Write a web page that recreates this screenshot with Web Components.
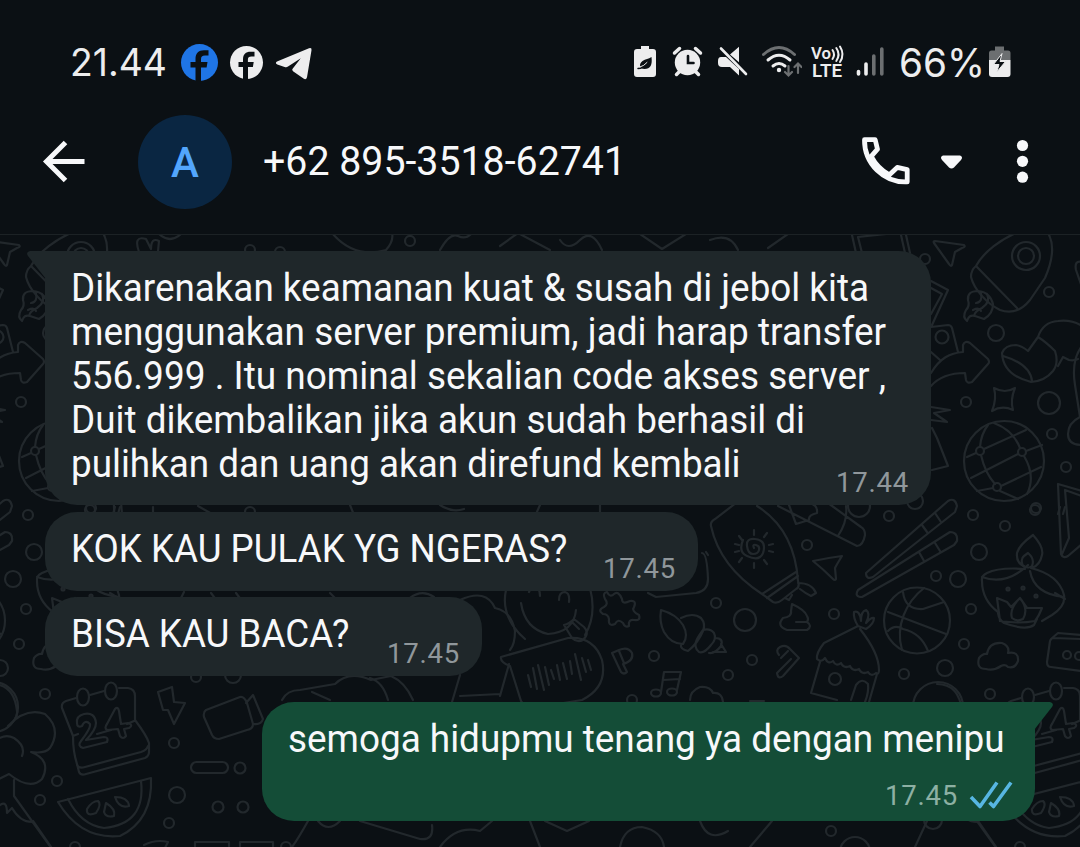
<!DOCTYPE html>
<html lang="id">
<head>
<meta charset="utf-8">
<title>Chat</title>
<style>
  html, body {
    margin: 0;
    background: #0b1014;
  }
  body {
    width: 1080px;
    height: 847px;
    overflow: hidden;
    font-family: Roboto, "Liberation Sans", sans-serif;
  }
</style>
</head>
<body>
<chat-screen>
  <status-bar slot="status" time="21.44" battery="66%"></status-bar>
  <chat-header slot="header" initial="A">+62 895-3518-62741</chat-header>
  <chat-bubble tail time="17.44" style="--w: 886px; --h: 254px">
    <text-line w="798">Dikarenakan keamanan kuat &amp; susah di jebol kita</text-line>
    <text-line w="815">menggunakan server premium, jadi harap transfer</text-line>
    <text-line w="815">556.999 . Itu nominal sekalian code akses server ,</text-line>
    <text-line w="734">Duit dikembalikan jika akun sudah berhasil di</text-line>
    <text-line w="669.5">pulihkan dan uang akan direfund kembali</text-line>
  </chat-bubble>
  <chat-bubble time="17.45" style="--w: 653px; --h: 79px; --gap: 7px">
    <text-line w="496.5">KOK KAU PULAK YG NGERAS?</text-line>
  </chat-bubble>
  <chat-bubble time="17.45" style="--w: 437px; --h: 79px; --gap: 6px">
    <text-line w="278.5">BISA KAU BACA?</text-line>
  </chat-bubble>
  <chat-bubble out tail time="17.45" style="--w: 773px; --h: 119px; --gap: 26px">
    <text-line w="716.5">semoga hidupmu tenang ya dengan menipu</text-line>
  </chat-bubble>
</chat-screen>

<script>
function attach(el, html) {
  const template = document.createElement('template');
  template.innerHTML = html;
  el.attachShadow({mode: 'open'}).appendChild(template.content.cloneNode(true));
}

class ChatScreen extends HTMLElement {
  constructor() {
    super();
    attach(this, `
      <style>
        :host {
          display: flex;
          flex-direction: column;
          width: 1080px;
          height: 847px;
          background: #0b1014;
        }
        .top {
          height: 234px;
          flex: none;
          border-bottom: 1px solid #1c2225;
        }
        .body {
          position: relative;
          flex: 1;
          overflow: hidden;
        }
        chat-wallpaper {
          position: absolute;
          inset: 0;
        }
        .list {
          position: relative;
          display: flex;
          flex-direction: column;
          align-items: flex-start;
          padding: 16px 45px 0;
        }
      </style>
      <div class="top">
        <slot name="status"></slot>
        <slot name="header"></slot>
      </div>
      <div class="body">
        <chat-wallpaper></chat-wallpaper>
        <div class="list"><slot></slot></div>
      </div>`);
  }
}

class StatusBar extends HTMLElement {
  constructor() {
    super();
    attach(this, `
      <style>
        :host {
          display: flex;
          align-items: center;
          box-sizing: border-box;
          height: 124px;
          padding: 0 69px 0 70px;
          color: #ededee;
        }
        svg { display: block; flex: none; }
        text-line { font-family: Inter, Roboto, sans-serif; }
        .apps { margin-left: 10px; }
        .icons { margin-right: 6px; }
        .end { margin-left: auto; display: flex; align-items: center; }
      </style>
      <text-line id="time" w="97" size="38.5"></text-line>
      <svg class="apps" width="150" height="44" viewBox="177 40 150 44">
        <circle cx="199.500" cy="62.500" r="18.500" fill="#1f75e6"/>
        <path d="M195.500 82V67.500h-5V62h5v-3c0-6 3-8.800 8.500-8.800h4.500v5.200h-3.500c-3 0-4 1.200-4 3.800V62h6.500l-.9 5.500H201V82z" fill="#0b1014"/>
        <circle cx="246.500" cy="62.500" r="16.500" fill="#ededee"/>
        <path d="M243 80V67h-4.500v-5h4.500v-2.500c0-5.300 2.700-7.800 7.500-7.800h4v4.700h-3c-2.700 0-3.600 1-3.600 3.300V62h5.800l-.8 5H248v13z" fill="#0b1014"/>
        <path d="M277 61.500 309 48.300q3-.9 2.500 2l-4.500 27q-.8 3-3.500 1.300L293 71.200q-1.600-1.200-.2-2.600l8-10.300L288 66.600q-1.600.9-3.400.3l-7.300-2.400q-2.700-1.500-.3-3z" fill="#ededee"/>
      </svg>
      <div class="end">
        <svg class="icons" width="172" height="44" viewBox="630 40 172 44" fill="none" stroke-linecap="round">
          <path d="M641 46h8v3h4q3 0 3 3v22q0 3-3 3h-16q-3 0-3-3V52q0-3 3-3h4z" fill="#ededee"/>
          <path d="M651.500 57c1 8-1 12-7 12-5 0-6-5-2-8 3-2 6-2 9-4z" fill="#0b1014"/>
          <path d="M638 68.500q5 0 9-5" stroke="#0b1014" stroke-width="1.500"/>
          <path d="M640 67q4-1 7-4.500" stroke="#ededee" stroke-width="1"/>
          <circle cx="687.500" cy="62.500" r="12.700" fill="#ededee"/>
          <path d="m674.500 53 5-4.500M700.500 53l-5-4.500" stroke="#ededee" stroke-width="3.500"/>
          <path d="m680 71-3.500 3.500M695 71l3.500 3.500" stroke="#ededee" stroke-width="3.500"/>
          <path d="M688 56v7h5.500" stroke="#0b1014" stroke-width="2.600"/>
          <path d="M730 54.500 739 46.700v15.500zM721 57h5l13 12v6.500l-9-8.500h-8q-4 0-4-4v-2q0-4 3-4z" fill="#ededee"/>
          <path d="m721 48.500 25 25.500" stroke="#ededee" stroke-width="2.600"/>
          <path d="M763.500 54.500q15.500-14 31 0" stroke="#6c6f71" stroke-width="3"/>
          <path d="M768 60q11-9.500 22 0M773 66q6-5 12 0" stroke="#ededee" stroke-width="3"/>
          <circle cx="779" cy="70" r="2.200" fill="#ededee"/>
          <path d="M788.500 66v9m-3.500-3 3.500 3.500 3.500-3.500M798 73v-9m-3.500 3 3.500-3.500 3.500 3.500" stroke="#6c6f71" stroke-width="2.200"/>
        </svg>
        <svg width="82" height="44" viewBox="808 40 82 44" fill="none" stroke-linecap="round">
          <g fill="#ededee" font-family="Roboto" font-weight="600">
            <text x="811" y="59" font-size="17" textLength="20" lengthAdjust="spacingAndGlyphs">Vo</text>
            <text x="812" y="77.300" font-size="17.500" textLength="30" lengthAdjust="spacingAndGlyphs">LTE</text>
          </g>
          <path d="M832.500 50q3 4.500 0 9M836.300 48q4.500 6.500 0 13M840 46.500q5 8 0 15.500" stroke="#ededee" stroke-width="2"/>
          <path d="M858.500 71.500v2.500M866 64v10" stroke="#ededee" stroke-width="3.600"/>
          <path d="M873.800 56v18M881.800 49v25" stroke="#6c6f71" stroke-width="3.600"/>
        </svg>
        <text-line id="battery" w="86" size="39" style="margin-left: 9px"></text-line>
        <svg width="26" height="44" viewBox="985 40 26 44">
          <path d="M995 46.500h9v4h4q2.500 0 2.500 2.500v7h-21.500v-7q0-2.500 2.500-2.500h3.500z" fill="#6c6f71"/>
          <path d="M989 60h21.500v14q0 3-3 3h-15.500q-3 0-3-3z" fill="#ededee"/>
          <path d="M1002 53.500 993.500 64.500h5.500L996.800 72 1005.500 61.500h-5.500z" fill="#0b1014" stroke="#ededee" stroke-width="1"/>
        </svg>
      </div>`);
    this.shadowRoot.getElementById('time').textContent = this.getAttribute('time');
    this.shadowRoot.getElementById('battery').textContent = this.getAttribute('battery');
  }
}

class ChatHeader extends HTMLElement {
  constructor() {
    super();
    attach(this, `
      <style>
        :host {
          display: flex;
          align-items: center;
          height: 76px;
          padding-left: 40px;
          color: #f7f8fa;
        }
        svg { display: block; flex: none; }
        .avatar {
          display: flex;
          align-items: center;
          justify-content: center;
          flex: none;
          width: 94px;
          height: 94px;
          margin: 0 31px 0 50px;
          border-radius: 50%;
          background: #0a2642;
          color: #53a6fd;
          font-size: 42px;
          font-weight: 500;
        }
        .name { margin-bottom: 2px; }
        .actions { margin-left: auto; }
      </style>
      <svg width="48" height="50" viewBox="40 137 48 50" fill="none" stroke="#f7f8fa" stroke-width="5">
        <path d="M84.500 161.500H47M65.500 142.500l-19 19 19 19"/>
      </svg>
      <div class="avatar"></div>
      <text-line class="name" w="363" size="40"><slot></slot></text-line>
      <svg class="actions" width="220" height="60" viewBox="860 132 220 60" fill="none" stroke="#f7f8fa">
        <path d="M864.500 139.700h10.700l2.300 9.500-6.300 7.200c4 7.500 10 14 18 18.500l8-7.500 10 2.200v12.300c-23 1-43-18-42.700-42.200z" stroke-width="4.800" stroke-linejoin="round"/>
        <path d="M871 157l-3 1.500M888.500 175l-1.500 4" stroke-width="3"/>
        <path d="M943 155.500h17q3.500 1.500 1 4.500l-7 7.500q-2.500 2-5 0l-7-7.500q-2.500-3 1-4.500z" fill="#f7f8fa" stroke="none"/>
        <g fill="#f7f8fa" stroke="none">
          <circle cx="1022.500" cy="145.500" r="5.600"/>
          <circle cx="1022.500" cy="161.300" r="5.600"/>
          <circle cx="1022.500" cy="177.200" r="5.600"/>
        </g>
      </svg>`);
    this.shadowRoot.querySelector('.avatar').textContent = this.getAttribute('initial');
  }
}

/* One line of text, fitted to a set width: stretched, or letter spaced with "track" */
class TextLine extends HTMLElement {
  constructor() {
    super();
    attach(this, `
      <style>
        :host {
          display: block;
          flex: none;
          white-space: nowrap;
        }
        span {
          display: inline-block;
          transform-origin: 0 50%;
        }
      </style>
      <span><slot></slot></span>`);
  }

  connectedCallback() {
    if (this.hasAttribute('size')) {
      this.style.fontSize = this.getAttribute('size') + 'px';
    }
    this.style.width = this.getAttribute('w') + 'px';
    requestAnimationFrame(() => this.fit());
  }

  fit() {
    const span = this.shadowRoot.querySelector('span');
    const want = Number(this.getAttribute('w'));
    const width = span.getBoundingClientRect().width;
    if (!want || !width) return;
    if (this.hasAttribute('track')) {
      span.style.letterSpacing = (want - width) / this.textContent.length + 'px';
    } else {
      span.style.transform = `scaleX(${want / width})`;
    }
  }
}

class ChatBubble extends HTMLElement {
  constructor() {
    super();
    attach(this, `
      <style>
        :host {
          position: relative;
          display: block;
          box-sizing: border-box;
          width: var(--w);
          height: var(--h);
          margin-top: var(--gap, 0);
          padding: 15px 0 0 25.500px;
          border-radius: 32px;
          background: #1f272a;
          color: #f7f8fa;
          font-size: 38.500px;
          line-height: 44px;
        }
        :host([tail]) { border-top-left-radius: 0; }
        :host([out]) {
          align-self: flex-end;
          background: #144d37;
          border-radius: 32px 0 32px 32px;
        }
        .tail { display: none; position: absolute; top: 0; left: -18px; }
        :host([tail]) .tail { display: block; }
        :host([out]) .tail { left: auto; right: -18px; transform: scaleX(-1); }
        .tail path { fill: #1f272a; }
        :host([out]) .tail path { fill: #144d37; }
        .meta {
          position: absolute;
          right: 22px;
          bottom: 6px;
          display: flex;
          align-items: center;
          font-size: 27.500px;
          line-height: 32px;
          color: #90979b;
        }
        .ticks { display: none; margin-left: 11px; }
        :host([out]) .meta { color: #8db0a3; bottom: 9px; }
        :host([out]) .ticks { display: block; }
      </style>
      <svg class="tail" width="19" height="28" viewBox="0 0 19 28"><path d="M3 0h16v28L1 5Q-1.500 1 3 0z"/></svg>
      <slot></slot>
      <div class="meta">
        <text-line id="time" w="73" track></text-line>
        <svg class="ticks" width="44" height="30" viewBox="0 0 44 30" fill="none" stroke="#57b6e2" stroke-width="3.600" stroke-linejoin="round"><path d="m2 16 9 9.500L28 1.500M20.500 21.500l4 4L42 1.500"/></svg>
      </div>`);
    this.shadowRoot.getElementById('time').textContent = this.getAttribute('time');
  }
}

/* Doodle wallpaper, repeats every 945px */
class ChatWallpaper extends HTMLElement {
  constructor() {
    super();
    const dots = [
      [925, 259, 5], [1049, 292, 5], [996, 333, 8], [966, 402, 5], [1049, 403, 11], [1052, 434, 5],
      [1066, 467, 5], [942, 337, 6.5], [807, 545, 5], [716, 603, 5], [745, 620, 11], [834, 614, 5],
      [752, 660, 5], [728, 675, 5], [936, 576, 5], [958, 579, 8], [979, 552, 8], [889, 516, 5],
      [973, 515, 5], [1005, 526, 5], [1035, 510, 5], [971, 609, 5], [964, 644, 5], [945, 668, 8],
      [904, 674, 5], [990, 694, 5], [915, 501, 8], [859, 506, 11], [654, 656, 5], [938, 707, 25],
      [632, 700, 5], [57, 781, 5], [40, 800, 5], [174, 743, 5], [240, 768, 5.5], [177, 795, 8],
      [169, 823, 5], [218, 807, 5.5], [243, 807, 5.5], [233, 675, 8], [196, 677, 5], [75, 847, 5],
      [250, 250, 5], [280, 252, 5], [831, 831, 5], [410, 241, 5], [855, 852, 15], [933, 820, 9],
      [91, 508, 5], [250, 512, 5], [286, 847, 5]
    ].map(([x, y, r]) => `<circle cx="${x}" cy="${y}" r="${r}"/>`).join('');
    attach(this, `
      <style>
        :host { display: block; }
        svg { display: block; }
      </style>
      <svg width="1080" height="612" viewBox="0 235 1080 612" fill="none" stroke="#22282c" stroke-width="2.200" stroke-linecap="round" stroke-linejoin="round">
        <g id="tile">
          ${dots}
          <!-- papers, plane -->
          <path d="M852 235l4 18M858 237l4 16M858 237l37-4M901 235l4 18M906 235l4 18"/>
          <path d="M935 241l29 4q2 2-2 3l-7 4-3 13q-1 2-3-1l-15-21q-1-2 1-2z"/>
          <!-- rocket -->
          <path d="M976 266c8-15 26-27 40-33M1048 233c7 12 4 29-3 45l-15 22q-13 16-30 10c-14-7-26-21-29-33q0-7 5-11l41 42"/>
          <circle cx="1026" cy="256" r="14"/><circle cx="1026" cy="256" r="8"/>
          <path d="M978 291q-11 0-10 9 2 6-2 10-4 7 1 11 2-7 8-5l9 3q9-5 9-15-3-12-15-13zM981 293q2 9-5 10M987 294q4 8-5 14-7 3-8 8M973 310q6-3 8 1"/>
          <!-- envelope, tag, arrow -->
          <path d="M931 281l17 9-16 35M931 288l11 6-11 20M931 327l17-2q3 0 4 3l6 24M931 352l9 8"/>
          <path d="M931 373c9-15 19-20 32-21v-7q2-5 7-2l18 16q2 3 0 5l-16 18q-5 2-6-2l-1-7c-15 0-27 5-34 13"/>
          <!-- sock -->
          <path d="M1002 353q3-8 14-8 6 1 12 6l10-14q8 5 17 14 4 12-2 20-8 10-22 11-28-7-29-29zM1003 356q27 8 29 25M1038 337q5-15 20-16 14-2 26 6M1058 366l5-9 6 3q5 1 9-1"/>
          <path d="M994 388q11 6 21 0-5 12-2 22-11-5-21 1 5-12 2-23z"/>
          <!-- globe -->
          <circle cx="1004" cy="461" r="40"/>
          <circle cx="980" cy="451" r="4"/><circle cx="1022" cy="452" r="4"/><circle cx="997" cy="487" r="4"/>
          <path d="M980 447q1-13 8-22M1020 448q-7-18-26-25M967 457l9-4M984 449l42-19M971 478l47-24M1026 451l16-6M981 455q4 18 14 29M1024 456q12 20 3 38M1001 486l40-19M993 488l-16 3M1000 491l18 8"/>
          <path d="M931 407l19 3-16 3 13 9-16-2M932 428l5 10 11 28-16 4"/>
          <path d="M1082 262q-8-2-6 8l7 20M1082 346q-11 14-7 39l5 32q-12 6-12 17 0 11 14 11"/>
          <path d="M1082 491l-24-7 3 70q2 5 7 2l14-12M1082 496l-17-6 4 48-7 16"/>
          <!-- sun lotion -->
          <path d="M736 503l-21 16q-5 3-4 7c6 28 25 51 51 68l11 8q4 2 9-2l14-11q4-2 2-8c-2-30-14-58-41-75M762 594l34-22M767 598l31-22M798 583q14 0 18 10l-5 3q-6-3-11-7M785 598l4 2 3-5"/>
          <path d="M754 548q-2-4 2-3t3 5-6 4-6-8 8-7 9 8-4 10-13-1-4-16M754 530v5M754 563v5M739 536l3 4M735 544l4 1M735 552l4-1M739 562l3-4M764 560l3 4M769 551l4 1M769 545l4-1M764 537l3-4"/>
          <path d="M792 604q13 6 15 12 2 3 0 6 6 4 0 8l-20 0q-11-4-4-12 9-1 8-7zM807 622l-11 0"/>
          <path d="M813 561q14-3 29-5-5 8-7 12l1 11q-1 2-3 0-10-10-20-18z"/>
          <!-- marker -->
          <path d="M778 506l79 40q6 0 8-11 0-6-4-8l-33-24M808 503q10 1 9 10-9 2-8 7l-13 4-7-19M846 506q2 15-8 30"/>
          <!-- chopsticks -->
          <path d="M866 573l82-72q7-4 9 5l-2 6-82 65q-7 3-7-4zM858 590l92-58q8 0 7 9l-3 4-92 52q-8 0-4-7zM922 525l5 7M935 513l6 9M919 552l5 9M935 543l5 8"/>
          <!-- ball -->
          <circle cx="917" cy="620.500" r="33"/>
          <path d="M888 612l58 22M903 592q2 18 20 17l21-7M924 588c-18 14-29 38-22 62M888 631q7-7 15-2 18 4 25 22"/>
          <!-- oil lamp -->
          <path d="M1033 535q11 12 9 20-2 10-10 13M1033 535q-14 10-16 18-1 10 7 13M1023 566q-3-7 1-10l4-3q7 6 4 13-3 3-9 0z"/>
          <path d="M1025 569q-26-2-38 4-6 3-5 8 0 19 16 31M1064 595q2 11-12 20l-10 6M982 577q24 9 46-12M1031 568q28 7 33 27M1030 571q4 23 34 26"/>
          <path d="M1000 621l-3-23 10 4 4 5 9-9 7 10 15 0q-3 8-7 13-16 3-35 0zM1020 598q-11 11-8 20 5 4 11 1 6-10-3-21M998 613q1 7 6 10 22 8 30 2l3-6"/>
          <circle cx="1008" cy="589" r="1.500"/><circle cx="1023" cy="588" r="1.500"/><circle cx="1036" cy="596" r="1.500"/>
          <path d="M986 669q-10 0-7-11 4-5 8-4 2-12 15-11 8 3 6 10 11-2 10 8-3 8-10 6-3-3-7-1-7 5-15 3z"/>
          <path d="M1080 639l-26-1q-3 0-4 3l-3 21q0 5 4 5l30 4M1051 639l7-6 24 2"/><circle cx="1067" cy="655" r="4"/><circle cx="1079" cy="656" r="4"/>
          <!-- house -->
          <path d="M858 626l-34 17q-8 10-7 16 4 4 8-1 3 7 8 3 3 6 8 2 3 6 9 3 3 6 9 3 3 6 9 3 3 5 8 1 3 2 3-3 0-17-19-41M858 626q-5-8-4-14 6-2 7 9 0-10 5-11 5 3 0 13 5-6 8-5 0 6-8 11zM820 662l-9 31 26 7M877 674l-8 28M851 700l5-15q6-8 12-1 1 8-3 18"/><circle cx="835" cy="679" r="6"/>
          <path d="M779 655q-4-5 1-8 6-3 10 2l9 9-16 18q-5 4-6-3l14-14M788 651l-7 7"/>
          <!-- shell -->
          <path d="M661 610q15 4 22 15 6 11 0 19-12 0-19-12-5-10-3-22zM681 618q12-6 20 0 5 6 2 13-5 12-15 20-8-2-7-6M703 630q7-2 11 3 3 6-3 12-7 9-12 7-6-5-2-13 3-5 6-9zM715 638q9 0 6 8-6 8-12 7M721 644l5 8-13 0"/>
          <path d="M708 555l-2-3M702 553q5 0 6 26 0 12-12 14l-40 4-8-4"/>
          <path d="M690 700q0-9 10-13 10-1 13 6 9-1 10 9M750 701l14 0"/>
          <path d="M607 592q3 6 7 2t8 5q0 6 8 2 7-1 4 6-3 4 5 8 2 6-5 5-6-1-5 6-4 2-6-3-5-5-8 1-7 3-6-5-1-5-6-5-6-4 1-7 5-3 1-8-3-6 2-7z"/>
          <path d="M612 653l7-3q9-4 13 3 2 8-9 11l4 8q-3 3-6 0zM619 651l5 12M661 692l3-20 17 0-4 18M663 680l17-1"/>
          <ellipse cx="656" cy="693" rx="5" ry="3.500"/><ellipse cx="672" cy="692" rx="5" ry="3.500"/>
          <!-- smiley and voice note -->
          <path d="M506 590q-6 27 19 49M590 588q7 27-5 47M521 603q4 26 27 31 26-2 28-24M529 592q2-5 5-5 6 0 6 9M559 600q0-8 6-8 5 1 4 10M564 625q5-1 10-6l10 8q6 6-1 13-6 3-11-2zM573 623l6 6"/>
          <path d="M501 657l67-19q26-2 34 22 6 27-20 40l-50 8q-9-3-11-7l-11-35q-10-4-9-9zM509 664l-9 32M460 600q26-12 35 8 16 3 20 23 0 13-5 19M460 675l-8 27M460 696l40-2"/>
          <path d="M528 675l3 12M533 668l4 21M538 665l6 25M545 667l4 18M551 670l3 9M557 665l3 15M563 663l4 16M570 661l2 13M575 654l6 26M582 658l4 14M588 660l3 10"/>
          <!-- flower -->
          <path d="M-8 684q22 0 25 27 1 8-9 15 18-19 37-12 17 15 5 34-5 6-19 4 21 8 11 27-12 12-33-5l-20 10M-6 742q10-9 20-4 12 8 8 18M14 780v16l38 53M0 805q7-5 7 8l5-5q8 14 20 14"/>
          <!-- calendar -->
          <path d="M76 698l-10 3q-5 2-4 7l11 28q0 16 4 28l2 8q2 4 7 2l59-16q4-2 4-6v-9q-2-7-14-23v-24q0-7-7-8h-9M90 695l14-4M77 765q2 4 8 2l56-15q6-2 7-6M73 736l5-2M127 724l7-3M97 734l14-4"/>
          <ellipse cx="83" cy="697" rx="6" ry="8.500"/><ellipse cx="111" cy="691" rx="6" ry="8.500"/>
          <path d="M77 723q-1-7 7-9 11-2 12 9 0 7-10 17l18-3q5 0 3 5l-24 6q-6-2-2-7 10-13 9-17-5-5-8 2-5 2-5-3zM107 730q-3-2 0-6l8-15q3-3 4 2l2 13 7-1q6 2 1 5l-5 1 2 7q-3 4-6 0l-2-7z"/>
          <path d="M158 692l14-5 2 15 11 1-11 21-6-14-5 0zM206 710l34-13q4-1 7 6l6 21q0 5-6 6l-28 9q-5 0-7-4l-8-18q-1-5 2-7zM246 703l7-8 10 24q-2 6-9 5"/>
          <rect x="191" y="762" width="37" height="11" rx="5.500"/>
          <!-- watermelon -->
          <path d="M58 802l93-24q2 42-31 58-39 4-62-34zM68 799q13 26 36 29 42-4 37-47M98 801q4 3-2 12-10 4-9-4 5-8 11-8zM106 803q10 6 8 13-8 2-10-4zM115 797q13 0 14 9-10 3-14-9z"/>
          <!-- scattered scraps -->
          <path d="M282 700q5-10 18-10l35-6q14-14 36-4l20-4q14 6 22 24M312 692l18 8M370 678q13 4 18 22M139 252q-6-17 7-13l5 10q0-12 8-8l-1 10M158 233q12 12 24 0M332 233q22 26 54 17 8-9 6-17M440 250q10-18 18-14t14-3M500 246l18-13 32 17M560 240q8 12 20 0t22 10M640 234l22 15 24-15M710 240q20-8 28 10M768 248l20-14"/>
          <path d="M115 507l-2 7M120 507l-2 7M153 507v6M198 506l14 8M350 505l4 10M440 505q12 8 24 4M540 505l-4 9M600 504v10M110 593l10 6M180 600l4-8M211 593l6 8M236 593l6 8M330 593l8 8M410 598q12-9 24-1"/>
          <path d="M308 821q-10 18-16 26M318 821q10 12 22 0M360 821l60 18q14 2 12-14M440 847q16-22 40-16l12-10M530 821l10 26M545 821l22 10 22-10M620 847q4-20 22-20 20 4 22 20M700 821q8 22 28 10M750 847l22-26M915 847l12-26M978 821l18 26M144 845q12-6 24-3l-3 6M195 846v-4h34v4M240 846v-4h33v4"/>
        </g>
      </svg>`);
    // neighbouring copies of the tile on both sides
    const tile = this.shadowRoot.getElementById('tile');
    [-945, 945].forEach((dx) => {
      const copy = tile.cloneNode(true);
      copy.removeAttribute('id');
      copy.setAttribute('transform', `translate(${dx} 0)`);
      tile.parentNode.appendChild(copy);
    });
  }
}

customElements.define('text-line', TextLine);
customElements.define('chat-wallpaper', ChatWallpaper);
customElements.define('chat-bubble', ChatBubble);
customElements.define('chat-header', ChatHeader);
customElements.define('status-bar', StatusBar);
customElements.define('chat-screen', ChatScreen);
</script>
</body>
</html>
